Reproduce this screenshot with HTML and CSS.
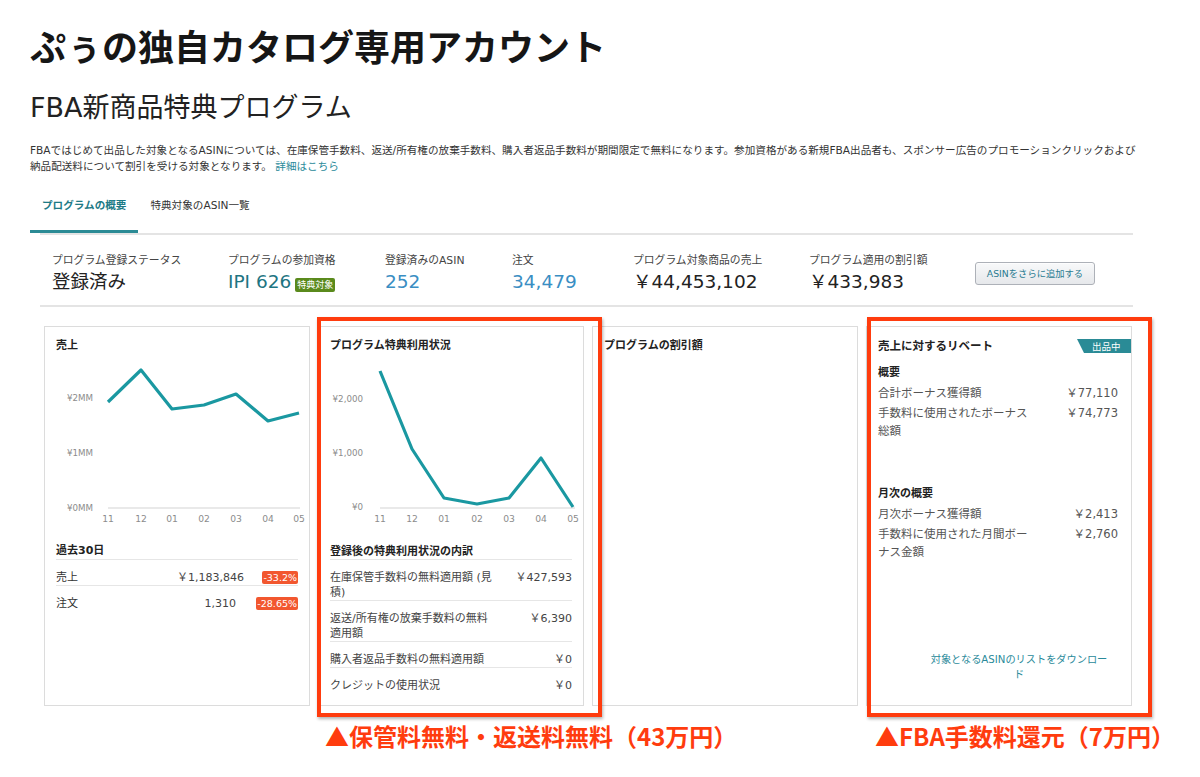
FILE: index.html
```html
<!DOCTYPE html>
<html lang="ja">
<head>
<meta charset="utf-8">
<title>FBA新商品特典プログラム</title>
<link rel="stylesheet" href="styles.css">
</head>
<body>
<div class="page">
  <h1 class="account">ぷぅの独自カタログ専用アカウント</h1>
  <h2 class="program">FBA新商品特典プログラム</h2>
  <p class="desc">FBAではじめて出品した対象となるASINについては、在庫保管手数料、返送/所有権の放棄手数料、購入者返品手数料が期間限定で無料になります。参加資格がある新規FBA出品者も、スポンサー広告のプロモーションクリックおよび<br>納品配送料について割引を受ける対象となります。 <a class="link" href="#">詳細はこちら</a></p>

  <nav class="tabs">
    <span class="tab active">プログラムの概要</span>
    <span class="tab">特典対象のASIN一覧</span>
  </nav>

  <section class="stats">
    <div class="stat"><div class="stat-label">プログラム登録ステータス</div><div class="stat-value">登録済み</div></div>
    <div class="stat"><div class="stat-label">プログラムの参加資格</div><div class="stat-value teal">IPI 626<span class="tag-green">特典対象</span></div></div>
    <div class="stat"><div class="stat-label">登録済みのASIN</div><div class="stat-value blue">252</div></div>
    <div class="stat"><div class="stat-label">注文</div><div class="stat-value blue">34,479</div></div>
    <div class="stat"><div class="stat-label">プログラム対象商品の売上</div><div class="stat-value">￥44,453,102</div></div>
    <div class="stat"><div class="stat-label">プログラム適用の割引額</div><div class="stat-value">￥433,983</div></div>
    <button class="add-btn" type="button">ASINをさらに追加する</button>
  </section>

  <section class="cards">
    <div class="card">
      <div class="card-title">売上</div>
      <svg class="chart" width="244" height="170" viewBox="0 0 244 170">
        <line class="axis" x1="52" y1="149" x2="244" y2="149"/>
        <text class="ylab" x="37" y="42">¥2MM</text>
        <text class="ylab" x="37" y="97">¥1MM</text>
        <text class="ylab" x="37" y="152">¥0MM</text>
        <polyline class="line" points="52,43 85,11 116,50 148,46 180,35 212,62 243,54"/>
        <text class="xlab" x="52" y="163">11</text>
        <text class="xlab" x="85" y="163">12</text>
        <text class="xlab" x="116" y="163">01</text>
        <text class="xlab" x="148" y="163">02</text>
        <text class="xlab" x="180" y="163">03</text>
        <text class="xlab" x="212" y="163">04</text>
        <text class="xlab" x="243" y="163">05</text>
      </svg>
      <div class="sec-head">過去30日</div>
      <div class="kpi-row">
        <span class="kpi-label">売上</span>
        <span class="kpi-val">￥1,183,846</span>
        <span class="kpi-delta"><span class="delta">-33.2%</span></span>
      </div>
      <div class="kpi-row last">
        <span class="kpi-label">注文</span>
        <span class="kpi-val shift">1,310</span>
        <span class="kpi-delta"><span class="delta">-28.65%</span></span>
      </div>
    </div>

    <div class="card">
      <div class="card-title">プログラム特典利用状況</div>
      <svg class="chart" width="244" height="170" viewBox="0 0 244 170">
        <line class="axis" x1="50" y1="149" x2="245" y2="149"/>
        <text class="ylab" x="33" y="43">¥2,000</text>
        <text class="ylab" x="33" y="97">¥1,000</text>
        <text class="ylab" x="33" y="151">¥0</text>
        <polyline class="line" points="50,12 82,90 114,139 147,145 179,139 211,99 243,148"/>
        <text class="xlab" x="50" y="163">11</text>
        <text class="xlab" x="82" y="163">12</text>
        <text class="xlab" x="114" y="163">01</text>
        <text class="xlab" x="147" y="163">02</text>
        <text class="xlab" x="179" y="163">03</text>
        <text class="xlab" x="211" y="163">04</text>
        <text class="xlab" x="243" y="163">05</text>
      </svg>
      <div class="sec-head tight">登録後の特典利用状況の内訳</div>
      <div class="brk-row"><span class="brk-label">在庫保管手数料の無料適用額 (見<br>積)</span><span class="brk-val">￥427,593</span></div>
      <div class="brk-row"><span class="brk-label">返送/所有権の放棄手数料の無料<br>適用額</span><span class="brk-val">￥6,390</span></div>
      <div class="brk-row"><span class="brk-label">購入者返品手数料の無料適用額</span><span class="brk-val">￥0</span></div>
      <div class="brk-row last"><span class="brk-label">クレジットの使用状況</span><span class="brk-val">￥0</span></div>
    </div>

    <div class="card">
      <div class="card-title">プログラムの割引額</div>
    </div>

    <div class="card rebate">
      <div class="rebate-head">
        <span class="card-title">売上に対するリベート</span>
        <span class="status">出品中</span>
      </div>
      <div class="rb-head">概要</div>
      <div class="rb-row"><span>合計ボーナス獲得額</span><span class="rb-val">￥77,110</span></div>
      <div class="rb-row"><span>手数料に使用されたボーナス<br>総額</span><span class="rb-val">￥74,773</span></div>
      <div class="rb-head monthly">月次の概要</div>
      <div class="rb-row"><span>月次ボーナス獲得額</span><span class="rb-val">￥2,413</span></div>
      <div class="rb-row"><span>手数料に使用された月間ボー<br>ナス金額</span><span class="rb-val">￥2,760</span></div>
      <a class="dl-link" href="#">対象となるASINのリストをダウンロー<br>ド</a>
    </div>

    <div class="callout callout-1"><span class="callout-text">▲保管料無料・返送料無料（43万円）</span></div>
    <div class="callout callout-2"><span class="callout-text">▲FBA手数料還元（7万円）</span></div>
  </section>
</div>
</body>
</html>
```

FILE: styles.css
```css
html, body {
  margin: 0;
  padding: 0;
  background: #ffffff;
}

body {
  font-family: "DejaVu Sans", "Noto Sans CJK JP", sans-serif;
  color: #333333;
}

.page {
  padding: 0 0 72px 30px;
  width: 1103px;
}

.account {
  margin: 0;
  padding-top: 22px;
  font-family: "Noto Sans CJK JP", sans-serif;
  font-weight: 700;
  font-size: 36px;
  line-height: 46px;
  color: #161616;
}

.program {
  margin: 22px 0 0;
  font-family: "DejaVu Sans", "Noto Sans CJK JP", sans-serif;
  font-weight: 400;
  font-size: 27px;
  line-height: 36px;
  color: #222222;
}

.desc {
  margin: 16px 0 0;
  font-size: 10.6px;
  line-height: 16px;
  white-space: nowrap;
  color: #333333;
}

.link {
  color: #2a8a9a;
  text-decoration: none;
}

.tabs {
  display: flex;
  margin-top: 11px;
}

.tab {
  padding: 12px 12px 17px;
  font-size: 10.6px;
  line-height: 16px;
  border-bottom: 3px solid transparent;
  color: #333333;
}

.tab.active {
  color: #1d7a86;
  font-weight: 700;
  border-bottom-color: #2b8b95;
}

.stats {
  margin-left: 10px;
  border-top: 2px solid #e4e4e4;
  border-bottom: 2px solid #e4e4e4;
  display: grid;
  grid-template-columns: 176px 157px 127px 121px 176px 166px auto;
  align-items: start;
  padding: 18px 0 12px 12px;
}

.stat-label {
  font-size: 10.8px;
  line-height: 15px;
  color: #444444;
  white-space: nowrap;
}

.stat-value {
  margin-top: 3px;
  font-size: 18.5px;
  line-height: 22px;
  color: #222222;
  white-space: nowrap;
}

.stat-value.teal {
  color: #1e7582;
}

.stat-value.blue {
  color: #3a8ec3;
}

.tag-green {
  display: inline-block;
  vertical-align: 0;
  margin-left: 4px;
  padding: 0 2px;
  font-size: 9px;
  line-height: 14px;
  background: #5a8a1c;
  color: #ffffff;
  border-radius: 2px;
  font-family: "Noto Sans CJK JP", sans-serif;
}

.add-btn {
  align-self: center;
  justify-self: start;
  width: 120px;
  height: 23px;
  padding: 0;
  font-family: "DejaVu Sans", "Noto Sans CJK JP", sans-serif;
  font-size: 9.3px;
  color: #2a7b91;
  background: linear-gradient(#f8f9fa, #e6e8eb);
  border: 1px solid #adb1b8;
  border-radius: 3px;
  box-shadow: inset 0 1px 0 rgba(255, 255, 255, 0.7);
}

.cards {
  position: relative;
  display: grid;
  grid-template-columns: repeat(4, 266px);
  gap: 8px;
  margin: 19px 0 0 14px;
}

.card {
  height: 380px;
  box-sizing: border-box;
  border: 1px solid #dcdcdc;
  padding: 11px;
  display: flex;
  flex-direction: column;
}

.card-title {
  font-weight: 700;
  font-size: 11px;
  line-height: 16px;
  color: #222222;
}

.chart {
  display: block;
  margin-top: 5px;
  overflow: visible;
}

.chart .axis {
  stroke: #e2e2e2;
  stroke-width: 1.5;
}

.chart .line {
  fill: none;
  stroke: #1a98a1;
  stroke-width: 3.2;
  stroke-linejoin: round;
}

.chart .ylab {
  font-family: "DejaVu Sans", sans-serif;
  font-size: 8.7px;
  fill: #8c8c8c;
  text-anchor: end;
}

.chart .xlab {
  font-family: "DejaVu Sans", sans-serif;
  font-size: 9.2px;
  fill: #8c8c8c;
  text-anchor: middle;
}

.sec-head {
  margin-top: 14px;
  font-weight: 700;
  font-size: 11px;
  line-height: 15px;
  padding-bottom: 1px;
  border-bottom: 1px solid #e6e6e6;
  color: #222222;
}

.sec-head.tight {
  margin-top: 15px;
  padding-bottom: 0;
}

.kpi-row {
  display: grid;
  grid-template-columns: 1fr auto 42px;
  column-gap: 12px;
  align-items: center;
  padding-top: 10px;
  line-height: 15px;
  font-size: 11px;
  border-bottom: 1px solid #e6e6e6;
  color: #333333;
}

.kpi-row.last {
  border-bottom: none;
}

.kpi-val {
  text-align: right;
  color: #444444;
}

.kpi-val.shift {
  margin-right: 8px;
}

.kpi-delta {
  text-align: right;
}

.delta {
  display: inline-block;
  background: #f2572f;
  color: #ffffff;
  font-size: 9.5px;
  line-height: 13px;
  padding: 0 1px;
  border-radius: 2px;
}

.brk-row {
  display: flex;
  justify-content: space-between;
  padding-top: 10px;
  font-size: 11px;
  line-height: 15px;
  border-bottom: 1px solid #e6e6e6;
  color: #444444;
}

.brk-row.last {
  border-bottom: none;
}

.brk-label {
  white-space: nowrap;
}

.brk-val {
  white-space: nowrap;
  color: #444444;
}

.rebate .card-title {
  font-size: 11.5px;
}

.rebate-head {
  display: flex;
  justify-content: space-between;
  align-items: center;
}

.status {
  margin-right: -11px;
  width: 54px;
  box-sizing: border-box;
  height: 14px;
  padding-left: 15px;
  font-size: 9.5px;
  line-height: 14px;
  color: #ffffff;
  background: #2a8b96;
  clip-path: polygon(0 0, 100% 0, 100% 100%, 7px 100%);
  font-family: "Noto Sans CJK JP", sans-serif;
}

.rb-head {
  margin-top: 10px;
  font-weight: 700;
  font-size: 11px;
  line-height: 18px;
  color: #222222;
}

.rb-head.monthly {
  margin-top: 45px;
}

.rb-row {
  display: flex;
  justify-content: space-between;
  margin-top: 2px;
  font-size: 11.5px;
  line-height: 18px;
  color: #555555;
  white-space: nowrap;
}

.rb-val {
  padding-right: 2px;
  color: #555555;
}

.dl-link {
  margin-top: auto;
  margin-left: 40px;
  margin-bottom: 12px;
  text-align: center;
  font-size: 10.2px;
  line-height: 15px;
  color: #2a8a9a;
  text-decoration: none;
  white-space: nowrap;
}

.callout {
  position: absolute;
  top: -9px;
  width: 285px;
  height: 400px;
  box-sizing: border-box;
  border: 4px solid #ff3c0e;
  box-shadow: 1px 2px 3px rgba(0, 0, 0, 0.3);
  pointer-events: none;
}

.callout-1 {
  left: 273px;
}

.callout-2 {
  left: 823px;
}

.callout-text {
  position: absolute;
  left: 4px;
  top: calc(100% + 10px);
  font-family: "Noto Sans CJK JP", sans-serif;
  font-weight: 700;
  font-size: 24px;
  line-height: 26px;
  color: #ff3c0e;
  white-space: nowrap;
}
```
